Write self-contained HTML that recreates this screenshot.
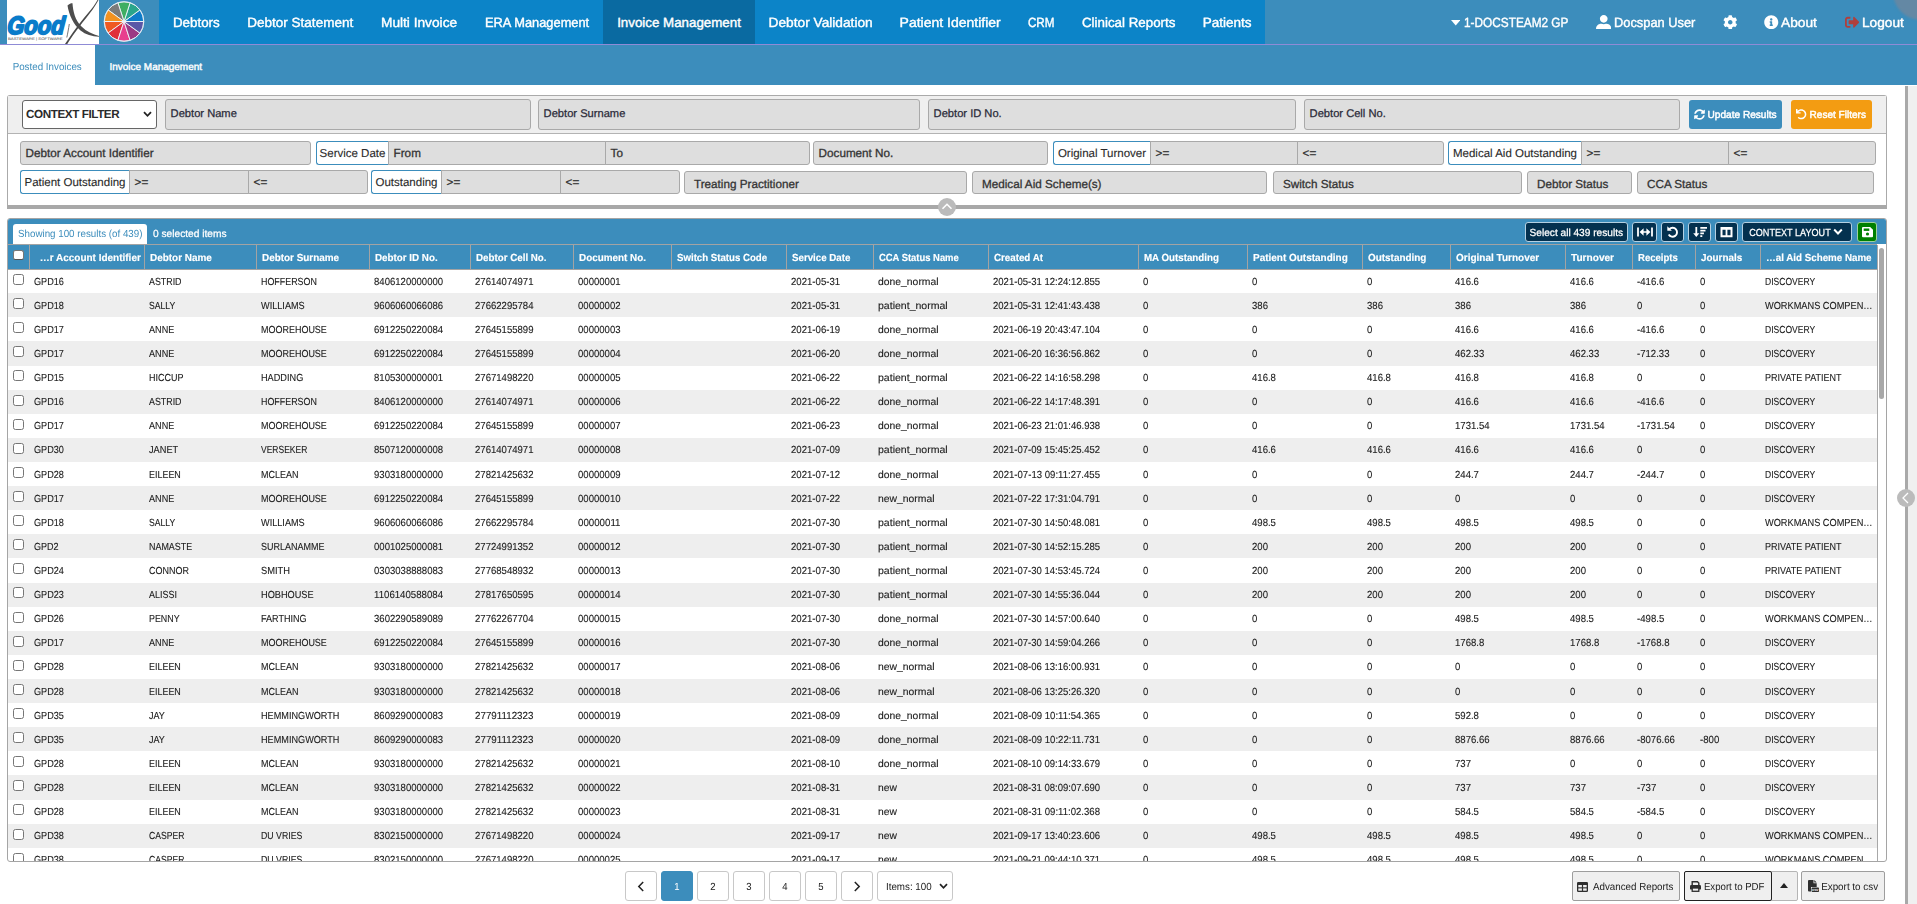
<!DOCTYPE html>
<html lang="en">
<head>
<meta charset="utf-8">
<title>Invoice Management - Posted Invoices</title>
<style>
*{box-sizing:border-box;margin:0;padding:0}
html,body{width:1917px;height:904px;overflow:hidden;background:#fff}
body{position:relative;font-family:"Liberation Sans",sans-serif;color:#2b2b2b;font-size:10.26px;text-rendering:geometricPrecision}
.abs{position:absolute}
svg{display:block}
.fc,.fl,.fr{display:inline-block;white-space:nowrap}
.fc{transform-origin:50% 50%}.fl{transform-origin:0 50%}.fr{transform-origin:100% 50%}
/* ---------- top header ---------- */
#top{position:absolute;left:0;top:0;width:1917px;height:44px;background:#3c8dbc}
#pline{position:absolute;left:0;top:44px;width:1917px;height:1px;background:#8f8bd6}
#logo{position:absolute;left:7px;top:0;width:92px;height:44px;background:#fff;overflow:hidden}
#wheel{position:absolute;left:101.7px;top:-1.2px}
#nav{position:absolute;left:159px;top:0;width:1106px;height:44px;background:#0c84c8}
.ni{position:absolute;top:0;height:44px;line-height:45.5px;text-align:center;color:#fff;font-size:13.33px;-webkit-text-stroke:.4px #fff;white-space:nowrap}
.ni.act{background:#0a6aa1}
.ri{position:absolute;top:0;height:44px;line-height:45.5px;color:#fff;font-size:13.33px;-webkit-text-stroke:.4px #fff;white-space:nowrap}
#corner{position:absolute;left:1893px;top:-36px;width:56px;height:56px;border-radius:50%;background:#6488a4;filter:blur(1px)}
/* ---------- second bar ---------- */
#bar2{position:absolute;left:0;top:45px;width:1917px;height:40px;background:#3c8dbc}
#tab1{position:absolute;left:0;top:0;width:95px;height:40px;background:#fff;color:#3c8dbc;line-height:45px;text-align:center;white-space:nowrap}
#tab2{position:absolute;left:95px;top:0;width:120px;height:40px;color:#fff;line-height:45px;text-align:center;-webkit-text-stroke:.4px #fff;white-space:nowrap}
/* ---------- right sidebar ---------- */
#rsb{position:absolute;left:1905px;top:86px;width:12px;height:818px;background:#f0f0f0}
#rsb i{position:absolute;left:0;top:0;width:3px;height:818px;background:#a9a9a9}
#rsbc{position:absolute;left:1897px;top:489px;width:18px;height:18px;border-radius:50%;background:#bbb}
/* ---------- filter panel ---------- */
#fp{position:absolute;left:7px;top:95px;width:1880px;height:114px;border:1px solid #aaa;border-bottom:4px solid #a8a8a8;border-radius:3px 3px 0 0;background:#fff}
#fp1{position:absolute;left:0;top:0;width:1878px;height:38px;background:#efefef;border-bottom:1px solid #b3b3b3}
.in{position:absolute;background:#dedede;border:1px solid #a9a9a9;border-radius:3px;color:#333;font-size:11.7px;white-space:nowrap;-webkit-text-stroke:.3px #333;padding-left:4.6px}
.r1{top:99px;height:31px;line-height:29.5px;font-size:11.15px;color:#2a2a38;-webkit-text-stroke:.25px #2a2a38}
.r2{top:141px;height:24px;line-height:24px}
.r3{top:170px;height:24px;line-height:24px}
.ms{top:171px;height:23px;line-height:26px;padding-left:9px}
.lab{position:absolute;background:#fff;border:1px solid #3c8dbc;border-right:0;border-radius:3px 0 0 3px;color:#2b2b2b;font-size:11.5px;white-space:nowrap;text-align:center;height:24px;line-height:24px;z-index:2;-webkit-text-stroke:.12px #2b2b2b}
.nl{border-radius:0;border-left:0}
.nr{border-radius:0 3px 3px 0}
.mid{border-radius:0}
#ctx{position:absolute;left:22px;top:100px;width:135px;height:29px;background:#fff;border:1px solid #666;border-radius:3px;font-size:11.7px;font-weight:bold;line-height:28px;padding-left:3px;color:#2a2a2a;letter-spacing:-.42px;white-space:nowrap}
.btn{position:absolute;top:100px;height:29px;line-height:31px;border-radius:3px;color:#fff;-webkit-text-stroke:.45px #fff;white-space:nowrap;text-align:center}
.btn svg{display:inline-block;vertical-align:-1.5px;margin-right:2.5px}
#colh{position:absolute;left:938px;top:198px;width:18px;height:18px;border-radius:50%;background:#bbb}
/* ---------- table panel ---------- */
#tp{position:absolute;left:7px;top:218px;width:1880px;height:644px;border:1px solid #a5a5a5;border-radius:3px;background:#fff;overflow:hidden}
#tbar{position:absolute;left:0;top:0;width:1878px;height:25px;background:#3c8dbc}
#ttab{position:absolute;left:5px;top:5px;width:134px;height:20px;background:#fff;border-radius:3px 3px 0 0;color:#3c8dbc;line-height:21px;text-align:center;white-space:nowrap}
#tsel{position:absolute;left:145px;top:5px;height:21px;color:#fff;line-height:21px;white-space:nowrap;-webkit-text-stroke:.25px #fff}
.tb{position:absolute;top:3.4px;height:19.6px;background:#04314f;border:1px solid #b4d0e2;border-radius:3px;color:#fff;line-height:21px;text-align:center;white-space:nowrap;-webkit-text-stroke:.25px #fff}
.tb svg{margin:0 auto}
#vline{position:absolute;left:1869px;top:26px;width:1px;height:620px;background:#a8a8a8;z-index:3}
#thead{position:absolute;left:0;top:25px;width:1869px;height:26px;z-index:2;background:#3c8dbc;border-top:1px solid #a3a3a3;border-bottom:1px solid #a3a3a3}
.hc{position:absolute;top:0;height:24px;line-height:28.4px;border-left:1px solid #a3a3a3;color:#fff;font-weight:bold;-webkit-text-stroke:.15px #fff;padding-left:5.2px;white-space:nowrap;overflow:hidden}
.hc:first-child{border-left:0;padding-left:0}
.hc.first{text-align:right;padding-right:2.8px}
#tbody{position:absolute;left:0;top:50px;width:1869px;height:592px;overflow:hidden}
.tr{position:absolute;left:0;width:1869px;height:24px;line-height:24px}
.tr.odd{background:#eee}
.td{position:absolute;top:2px;white-space:nowrap;color:#1c1c1c;-webkit-text-stroke:.12px #1c1c1c}
.tr.u .td{top:1px}
.cb{position:absolute;left:5.3px;top:5px;width:10.5px;height:10.5px;border:1px solid #767676;border-radius:2.5px;background:#fff}
.cb.hcb{top:4.8px;border-color:#777;border-bottom-color:#555}
#vthumb{position:absolute;left:1871px;top:28.5px;width:4.8px;height:151px;border-radius:3px;background:#a8a8a8}
/* ---------- bottom ---------- */
.pg{position:absolute;top:871px;width:32px;height:30px;border:1px solid #c8c8c8;border-radius:3px;background:#fff;color:#222;line-height:31px;text-align:center}
.pg.on{background:#3c8dbc;border-color:#3c8dbc;color:#fff}
.pg svg{margin:9px auto 0}
#items{position:absolute;left:877px;top:871px;width:76px;height:30px;border:1px solid #c8c8c8;border-radius:3px;background:#fff;line-height:31px;padding-left:8px;color:#222;white-space:nowrap}
.bb{position:absolute;top:871px;height:30px;border:1px solid #9d9d9d;border-radius:2px;background:#efefef;color:#222;line-height:32px;text-align:center;white-space:nowrap}
.bb svg{display:inline-block;vertical-align:-2px;margin-right:2px}
</style>
</head>
<body>

<!-- ================= TOP HEADER ================= -->
<div id="top">
  <div id="logo">
    <svg width="92" height="44" viewBox="0 0 92 44">
      <g transform="translate(0 33.800) skewX(-5)"><text x="-.3" y="0" font-family="Liberation Sans, sans-serif" font-size="25" font-weight="bold" font-style="italic" fill="#0a7cca" stroke="#0a7cca" stroke-width="1.900" stroke-linejoin="round" textLength="57.500" lengthAdjust="spacingAndGlyphs">Good</text></g>
      <text x="1" y="40" font-family="Liberation Sans, sans-serif" font-size="3.700" fill="#3c3c3c" textLength="54.500" lengthAdjust="spacingAndGlyphs">BASTEWARE | SOFTWARE</text>
      <path d="M60.500 5.500 C62.500 3.500 64.500 3 65.500 3.200 C66 11 68 20 74.500 26.500 C79.500 31.500 86 34.500 92 36 L92 36.800 C85 36.500 78.500 34.500 73.500 30.500 C66.500 24.500 62 15 60.500 5.500 Z" fill="#4d4d4d"/>
      <path d="M90.500 0 C88 4.500 85 8.500 81.500 12.500 C76 19 70 26.500 65.500 33 C63 36.800 60.500 40.500 58 44 L60.300 44 C62.500 40.500 65 36.500 68 32.500 C72.500 26 78 19.500 83 13 C86.500 8.500 89.500 4 91.500 0 Z" fill="#4a4a4a"/>
      <path d="M62.300 24 C61.500 29 60.800 33 59.800 37.500" stroke="#666" stroke-width=".9" fill="none"/>
    </svg>
  </div>
  <div id="wheel">
    <svg width="44" height="44" viewBox="-21.800 -22.300 43.600 43.600">
      <g stroke="#eef3f8" stroke-width="0.950">
        <path d="M0 0 L19.5 0 A19.5 19.5 0 0 0 15.776 -11.462 Z" fill="#0f7cc9"/>
        <path d="M0 0 L15.776 -11.462 A19.5 19.5 0 0 0 6.026 -18.546 Z" fill="#2aa58b"/>
        <path d="M0 0 L6.026 -18.546 A19.5 19.5 0 0 0 -6.026 -18.546 Z" fill="#3fae62"/>
        <path d="M0 0 L-6.026 -18.546 A19.5 19.5 0 0 0 -15.776 -11.462 Z" fill="#7b7b7b"/>
        <path d="M0 0 L-15.776 -11.462 A19.5 19.5 0 0 0 -19.5 0 Z" fill="#f39221"/>
        <path d="M0 0 L-19.5 0 A19.5 19.5 0 0 0 -15.776 11.462 Z" fill="#ef5a22"/>
        <path d="M0 0 L-15.776 11.462 A19.5 19.5 0 0 0 -6.026 18.546 Z" fill="#e0303b"/>
        <path d="M0 0 L-6.026 18.546 A19.5 19.5 0 0 0 6.026 18.546 Z" fill="#e83e8e"/>
        <path d="M0 0 L6.026 18.546 A19.5 19.5 0 0 0 15.776 11.462 Z" fill="#9c3a84"/>
        <path d="M0 0 L15.776 11.462 A19.5 19.5 0 0 0 19.5 0 Z" fill="#5a57a7"/>
      </g>
      <circle cx="0" cy="0" r="19.6" fill="none" stroke="#dfe8f0" stroke-width=".8"/>
    </svg>
  </div>
  <div id="nav">
    <div class="ni" style="left:0;width:74.5px"><span class="fc" style="transform:scaleX(1.002)">Debtors</span></div>
    <div class="ni" style="left:74.5px;width:133.5px"><span class="fc" style="transform:scaleX(1.014)">Debtor Statement</span></div>
    <div class="ni" style="left:208px;width:103.5px"><span class="fc" style="transform:scaleX(1.028)">Multi Invoice</span></div>
    <div class="ni" style="left:311.5px;width:132.5px"><span class="fc" style="transform:scaleX(0.963)">ERA Management</span></div>
    <div class="ni act" style="left:444px;width:152px"><span class="fc" style="transform:scaleX(1.000)">Invoice Management</span></div>
    <div class="ni" style="left:596px;width:131.5px"><span class="fc" style="transform:scaleX(1.028)">Debtor Validation</span></div>
    <div class="ni" style="left:727.5px;width:128px"><span class="fc" style="transform:scaleX(1.051)">Patient Identifier</span></div>
    <div class="ni" style="left:855.5px;width:53.5px"><span class="fc" style="transform:scaleX(0.875)">CRM</span></div>
    <div class="ni" style="left:909px;width:121.5px"><span class="fc" style="transform:scaleX(1.001)">Clinical Reports</span></div>
    <div class="ni" style="left:1030.5px;width:75.5px"><span class="fc" style="transform:scaleX(1.014)">Patients</span></div>
  </div>
  <!-- right items -->
  <svg class="abs" style="left:1450.700px;top:20px" width="9.500" height="6" viewBox="0 0 9.500 6"><path d="M0 0H9.500L4.750 5.600Z" fill="#fff"/></svg>
  <div class="ri" style="left:1463.5px"><span class="fl" style="transform:scaleX(0.887)">1-DOCSTEAM2 GP</span></div>
  <svg class="abs" style="left:1595.5px;top:14.5px" width="15.5" height="14.5" viewBox="0 0 448 420"><path fill="#fff" d="M224 224c62 0 112-50 112-112S286 0 224 0 112 50 112 112s50 112 112 112zm78 28h-15c-19 9-41 14-63 14s-44-5-63-14h-15C66 252 0 318 0 400v0c0 11 9 20 20 20h408c11 0 20-9 20-20v0c0-82-66-148-146-148z"/></svg>
  <div class="ri" style="left:1613.5px"><span class="fl" style="transform:scaleX(0.963)">Docspan User</span></div>
  <svg class="abs" style="left:1722.5px;top:14.5px" width="14.5" height="14.5" viewBox="0 0 512 512"><path fill="#fff" d="M487.4 315.700l-42.600-24.600c4.300-23.200 4.300-47 0-70.200l42.600-24.600c4.900-2.800 7.100-8.600 5.500-14-11.100-35.600-30-67.800-54.700-94.600-3.800-4.100-10-5.100-14.800-2.300L380.800 110c-17.900-15.400-38.500-27.300-60.800-35.100V25.800c0-5.600-3.900-10.500-9.400-11.700-36.700-8.200-74.300-7.800-109.200 0-5.500 1.200-9.400 6.100-9.400 11.700V75c-22.200 7.900-42.800 19.800-60.800 35.100L88.700 85.500c-4.900-2.800-11-1.900-14.800 2.300-24.700 26.700-43.600 58.900-54.700 94.600-1.700 5.400.6 11.200 5.500 14L67.300 221c-4.300 23.200-4.300 47 0 70.200l-42.600 24.600c-4.900 2.800-7.100 8.600-5.500 14 11.100 35.600 30 67.800 54.700 94.600 3.800 4.100 10 5.100 14.800 2.300l42.600-24.600c17.900 15.400 38.500 27.300 60.800 35.100v49.200c0 5.600 3.900 10.500 9.400 11.700 36.700 8.200 74.300 7.800 109.200 0 5.500-1.200 9.400-6.100 9.400-11.700v-49.200c22.200-7.900 42.800-19.800 60.800-35.100l42.600 24.600c4.900 2.800 11 1.900 14.800-2.300 24.700-26.700 43.600-58.900 54.700-94.600 1.500-5.500-.7-11.300-5.600-14.100zM256 336c-44.100 0-80-35.900-80-80s35.900-80 80-80 80 35.900 80 80-35.900 80-80 80z"/></svg>
  <svg class="abs" style="left:1764px;top:14.500px" width="14.5" height="14.5" viewBox="0 0 512 512"><path fill="#fff" d="M256 8C119 8 8 119 8 256s111 248 248 248 248-111 248-248S393 8 256 8zm0 110c23.200 0 42 18.800 42 42s-18.800 42-42 42-42-18.800-42-42 18.800-42 42-42zm56 254c0 6.600-5.400 12-12 12h-88c-6.600 0-12-5.400-12-12v-24c0-6.600 5.400-12 12-12h12v-64h-12c-6.600 0-12-5.400-12-12v-24c0-6.600 5.400-12 12-12h64c6.600 0 12 5.400 12 12v100h12c6.600 0 12 5.400 12 12v24z"/></svg>
  <div class="ri" style="left:1781px"><span class="fl" style="transform:scaleX(1.031)">About</span></div>
  <svg class="abs" style="left:1844.5px;top:15.500px" width="14.5" height="12.500" viewBox="0 0 512 440"><path fill="#b03f3c" d="M497 237 329 405c-15 15-41 4.500-41-17v-96H152c-13.300 0-24-10.700-24-24v-96c0-13.300 10.700-24 24-24h136V52c0-21.400 25.900-32 41-17l168 168c9.300 9.400 9.300 24.600 0 34zM192 400v-40c0-6.600-5.400-12-12-12H96c-17.700 0-32-14.300-32-32V124c0-17.700 14.300-32 32-32h84c6.600 0 12-5.400 12-12V40c0-6.600-5.400-12-12-12H96C43 28 0 71 0 124v192c0 53 43 96 96 96h84c6.600 0 12-5.400 12-12z"/></svg>
  <div class="ri" style="left:1862px"><span class="fl" style="transform:scaleX(1.025)">Logout</span></div>
  <div id="corner"></div>
</div>
<div id="pline"></div>

<!-- ================= SECOND BAR ================= -->
<div id="bar2">
  <div id="tab1" style="padding-right:1.5px"><span class="fc" style="transform:scaleX(0.955)">Posted Invoices</span></div>
  <div id="tab2" style="padding-left:1.5px"><span class="fc" style="font-size:9.97px;transform:scaleX(1.000)">Invoice Management</span></div>
</div>

<!-- ================= RIGHT SIDEBAR ================= -->
<div id="rsb"><i></i></div>
<div id="rsbc"><svg width="18" height="18" viewBox="0 0 18 18"><path d="M11 4 6 9l5 5" fill="none" stroke="#fff" stroke-width="1.300"/></svg></div>

<!-- ================= FILTER PANEL ================= -->
<div id="fp"><div id="fp1"></div></div>
<div id="ctx">CONTEXT FILTER<svg class="abs" style="left:120px;top:10px" width="9" height="7" viewBox="0 0 9 7"><path d="M1 1.200 4.500 4.800 8 1.200" fill="none" stroke="#222" stroke-width="1.800"/></svg></div>
<div class="in r1" style="left:165px;width:366px">Debtor Name</div>
<div class="in r1" style="left:538px;width:382px">Debtor Surname</div>
<div class="in r1" style="left:928px;width:368px">Debtor ID No.</div>
<div class="in r1" style="left:1304px;width:376px">Debtor Cell No.</div>
<div class="btn" style="left:1689px;width:93px;background:#3c8dbc"><svg width="11" height="11" viewBox="0 0 512 512"><path fill="#fff" d="M370.700 133.300C339.500 104 298.900 88 255.800 88c-77.500.1-144.300 53.200-162.800 126.900-1.300 5.400-6.100 9.200-11.700 9.200H24.100c-7.500 0-13.200-6.800-11.800-14.200C33.900 94.900 134.800 8 256 8c66.400 0 126.800 26.100 171.300 68.700L463 41c15.100-15.100 41-4.400 41 17v134c0 13.300-10.700 24-24 24H346c-21.400 0-32.100-25.900-17-41l41.700-41.700zM32 296h134c21.400 0 32.100 25.900 17 41l-41.800 41.700c31.300 29.300 71.800 45.300 114.900 45.300 77.400-.1 144.300-53.100 162.800-126.800 1.300-5.400 6.100-9.200 11.700-9.200h57.300c7.500 0 13.200 6.800 11.800 14.200C478.100 417.100 377.200 504 256 504c-66.400 0-126.800-26.100-171.300-68.700L49 471c-15.100 15.100-41 4.400-41-17V320c0-13.300 10.700-24 24-24z"/></svg><span class="fc" style="transform:scaleX(0.986)">Update Results</span></div>
<div class="btn" style="left:1791px;width:81px;background:#f39c12"><svg width="10.500" height="10.500" viewBox="0 0 512 512"><path fill="#fff" d="M212.300 224.300H12c-6.600 0-12-5.400-12-12V12C0 5.400 5.400 0 12 0h48c6.600 0 12 5.400 12 12v78.100C117.800 39.300 184.300 7.500 258.200 8c136.900.9 246.400 111.400 245.800 248.300C503.400 392.700 392.600 503 256 503c-64 0-122.300-24.200-166.300-64-5.100-4.600-5.300-12.500-.5-17.400l34-34c4.500-4.500 11.700-4.700 16.400-.5C170.800 414.300 211.500 431 256 431c96.700 0 175-78.300 175-175 0-96.700-78.300-175-175-175-58.200 0-109.700 28.400-141.500 72.100h97.800c6.600 0 12 5.400 12 12v47.200c0 6.600-5.400 12-12 12z"/></svg><span class="fc" style="transform:scaleX(0.979)">Reset Filters</span></div>

<div class="in r2" style="left:20px;width:291px">Debtor Account Identifier</div>
<div class="lab" style="left:316px;top:141px;width:72px">Service Date</div>
<div class="in r2 mid" style="left:388px;width:218px">From</div>
<div class="in r2 nr" style="left:605px;width:205px">To</div>
<div class="in r2" style="left:813px;width:235px">Document No.</div>
<div class="lab" style="left:1053px;top:141px;width:97px">Original Turnover</div>
<div class="in r2 mid" style="left:1150px;width:148px">&gt;=</div>
<div class="in r2 nr" style="left:1297px;width:147px">&lt;=</div>
<div class="lab" style="left:1448px;top:141px;width:133px">Medical Aid Outstanding</div>
<div class="in r2 mid" style="left:1581px;width:148px">&gt;=</div>
<div class="in r2 nr" style="left:1728px;width:148px">&lt;=</div>

<div class="lab" style="left:20px;top:170px;width:109px">Patient Outstanding</div>
<div class="in r3 mid" style="left:129px;width:120px">&gt;=</div>
<div class="in r3 nr" style="left:248px;width:120px">&lt;=</div>
<div class="lab" style="left:371px;top:170px;width:70px">Outstanding</div>
<div class="in r3 mid" style="left:441px;width:120px">&gt;=</div>
<div class="in r3 nr" style="left:560px;width:120px">&lt;=</div>
<div class="in ms" style="left:684px;width:283px">Treating Practitioner</div>
<div class="in ms" style="left:972px;width:295px">Medical Aid Scheme(s)</div>
<div class="in ms" style="left:1273px;width:249px">Switch Status</div>
<div class="in ms" style="left:1527px;width:105px">Debtor Status</div>
<div class="in ms" style="left:1637px;width:237px">CCA Status</div>
<div id="colh"><svg width="18" height="18" viewBox="0 0 18 18"><path d="M4.500 10.800 9 6.300l4.500 4.500" fill="none" stroke="#fff" stroke-width="1.600"/></svg></div>

<!-- ================= TABLE PANEL ================= -->
<div id="tp">
  <div id="tbar">
    <div id="ttab"><span class="fc" style="transform:scaleX(0.954)">Showing 100 results (of 439)</span></div>
    <div id="tsel"><span class="fl" style="transform:scaleX(0.994)">0 selected items</span></div>
    <div class="tb" style="left:1517px;width:103px"><span class="fc" style="transform:scaleX(0.989)">Select all 439 results</span></div>
    <div class="tb" style="left:1624px;width:25px"><svg width="16" height="18" viewBox="0 0 16 18"><path d="M1 4.400v9.200M15 4.400v9.200" stroke="#fff" stroke-width="1.800"/><path d="M4 9h8" stroke="#fff" stroke-width="1.700"/><path d="M6.600 5.300 2.600 9l4 3.700zM9.400 5.300l4 3.700-4 3.700z" fill="#fff"/></svg></div>
    <div class="tb" style="left:1653px;width:23px"><svg width="12" height="18" viewBox="0 0 12 18"><path d="M2.400 6A4.500 4.500 0 1 1 1.700 11.600" fill="none" stroke="#fff" stroke-width="1.900"/><path d="M.3 3.200v4.600h4.600z" fill="#fff"/></svg></div>
    <div class="tb" style="left:1680px;width:23px"><svg width="14" height="18" viewBox="0 0 14 18"><path d="M3.300 4v8" stroke="#fff" stroke-width="1.800"/><path d="M.2 10.200h6.200L3.300 14z" fill="#fff"/><path d="M7.300 4.800H14M7.300 7.600h5.200M7.300 10.400h3.600M7.300 13.200h2" stroke="#fff" stroke-width="1.700"/></svg></div>
    <div class="tb" style="left:1707px;width:23px"><svg width="13" height="18" viewBox="0 0 13 18"><path d="M1.500 5h10v8.200h-10z" fill="none" stroke="#fff" stroke-width="2"/><path d="M1 5.500h11" stroke="#fff" stroke-width="2.600"/><path d="M6.500 5v8" stroke="#fff" stroke-width="1.800"/></svg></div>
    <div class="tb" style="left:1734px;width:110px;padding-right:14px"><span class="fc" style="transform:scaleX(0.887)">CONTEXT LAYOUT</span><svg class="abs" style="left:90px;top:5px" width="10" height="8" viewBox="0 0 10 8"><path d="M1.200 1.500 5 5.500l3.800-4" fill="none" stroke="#fff" stroke-width="1.900"/></svg></div>
    <div class="tb" style="left:1849px;width:20px;background:#008000;border-color:#9ed09e"><svg width="11" height="18" viewBox="0 0 11 18"><path d="M0 5a1 1 0 0 1 1-1h7.200L11 6.800v6.400a1 1 0 0 1-1 1H1a1 1 0 0 1-1-1z" fill="#fff"/><rect x="1.700" y="5.500" width="5.600" height="2.400" fill="#008000"/><circle cx="5.500" cy="11" r="1.600" fill="#008000"/></svg></div>
  </div>
  <div id="thead"><div class="hc" style="left:0;width:21px"><span class="cb hcb"></span></div><div class="hc first" style="left:21px;width:115px"><span class="fr" style="transform:scaleX(0.974)">…r Account Identifier</span></div><div class="hc" style="left:136px;width:112px"><span class="fl" style="transform:scaleX(0.969)">Debtor Name</span></div><div class="hc" style="left:248px;width:113px"><span class="fl" style="transform:scaleX(0.967)">Debtor Surname</span></div><div class="hc" style="left:361px;width:101px"><span class="fl" style="transform:scaleX(0.957)">Debtor ID No.</span></div><div class="hc" style="left:462px;width:103px"><span class="fl" style="transform:scaleX(0.953)">Debtor Cell No.</span></div><div class="hc" style="left:565px;width:98px"><span class="fl" style="transform:scaleX(0.964)">Document No.</span></div><div class="hc" style="left:663px;width:115px"><span class="fl" style="transform:scaleX(0.942)">Switch Status Code</span></div><div class="hc" style="left:778px;width:87px"><span class="fl" style="transform:scaleX(0.949)">Service Date</span></div><div class="hc" style="left:865px;width:115px"><span class="fl" style="transform:scaleX(0.919)">CCA Status Name</span></div><div class="hc" style="left:980px;width:150px"><span class="fl" style="transform:scaleX(0.951)">Created At</span></div><div class="hc" style="left:1130px;width:109px"><span class="fl" style="transform:scaleX(0.950)">MA Outstanding</span></div><div class="hc" style="left:1239px;width:115px"><span class="fl" style="transform:scaleX(0.973)">Patient Outstanding</span></div><div class="hc" style="left:1354px;width:88px"><span class="fl" style="transform:scaleX(0.968)">Outstanding</span></div><div class="hc" style="left:1442px;width:115px"><span class="fl" style="transform:scaleX(0.976)">Original Turnover</span></div><div class="hc" style="left:1557px;width:67px"><span class="fl" style="transform:scaleX(0.986)">Turnover</span></div><div class="hc" style="left:1624px;width:63px"><span class="fl" style="transform:scaleX(0.930)">Receipts</span></div><div class="hc" style="left:1687px;width:65px"><span class="fl" style="transform:scaleX(0.965)">Journals</span></div><div class="hc" style="left:1752px;width:117px"><span class="fl" style="transform:scaleX(0.953)">…al Aid Scheme Name</span></div></div>
  <div id="tbody">
<div class="tr" style="top:0px;height:24px"><span class="cb"></span><span class="td" style="left:26.2px"><span class="fl" style="transform:scaleX(0.888)">GPD16</span></span><span class="td" style="left:141.2px"><span class="fl" style="transform:scaleX(0.865)">ASTRID</span></span><span class="td" style="left:253.2px"><span class="fl" style="transform:scaleX(0.869)">HOFFERSON</span></span><span class="td" style="left:366.2px"><span class="fl" style="transform:scaleX(0.932)">8406120000000</span></span><span class="td" style="left:467.2px"><span class="fl" style="transform:scaleX(0.932)">27614074971</span></span><span class="td" style="left:570.2px"><span class="fl" style="transform:scaleX(0.932)">00000001</span></span><span class="td" style="left:783.2px"><span class="fl" style="transform:scaleX(0.937)">2021-05-31</span></span><span class="td" style="left:870.2px"><span class="fl" style="transform:scaleX(1.012)">done_normal</span></span><span class="td" style="left:985.2px"><span class="fl" style="transform:scaleX(0.930)">2021-05-31 12:24:12.855</span></span><span class="td" style="left:1135.2px"><span class="fl" style="transform:scaleX(0.932)">0</span></span><span class="td" style="left:1244.2px"><span class="fl" style="transform:scaleX(0.932)">0</span></span><span class="td" style="left:1359.2px"><span class="fl" style="transform:scaleX(0.932)">0</span></span><span class="td" style="left:1447.2px"><span class="fl" style="transform:scaleX(0.932)">416.6</span></span><span class="td" style="left:1562.2px"><span class="fl" style="transform:scaleX(0.932)">416.6</span></span><span class="td" style="left:1629.2px"><span class="fl" style="transform:scaleX(0.937)">-416.6</span></span><span class="td" style="left:1692.2px"><span class="fl" style="transform:scaleX(0.932)">0</span></span><span class="td" style="left:1757.2px"><span class="fl" style="transform:scaleX(0.833)">DISCOVERY</span></span></div>
<div class="tr odd" style="top:24px;height:24px"><span class="cb"></span><span class="td" style="left:26.2px"><span class="fl" style="transform:scaleX(0.888)">GPD18</span></span><span class="td" style="left:141.2px"><span class="fl" style="transform:scaleX(0.841)">SALLY</span></span><span class="td" style="left:253.2px"><span class="fl" style="transform:scaleX(0.892)">WILLIAMS</span></span><span class="td" style="left:366.2px"><span class="fl" style="transform:scaleX(0.932)">9606060066086</span></span><span class="td" style="left:467.2px"><span class="fl" style="transform:scaleX(0.932)">27662295784</span></span><span class="td" style="left:570.2px"><span class="fl" style="transform:scaleX(0.932)">00000002</span></span><span class="td" style="left:783.2px"><span class="fl" style="transform:scaleX(0.937)">2021-05-31</span></span><span class="td" style="left:870.2px"><span class="fl" style="transform:scaleX(1.028)">patient_normal</span></span><span class="td" style="left:985.2px"><span class="fl" style="transform:scaleX(0.930)">2021-05-31 12:41:43.438</span></span><span class="td" style="left:1135.2px"><span class="fl" style="transform:scaleX(0.932)">0</span></span><span class="td" style="left:1244.2px"><span class="fl" style="transform:scaleX(0.932)">386</span></span><span class="td" style="left:1359.2px"><span class="fl" style="transform:scaleX(0.932)">386</span></span><span class="td" style="left:1447.2px"><span class="fl" style="transform:scaleX(0.932)">386</span></span><span class="td" style="left:1562.2px"><span class="fl" style="transform:scaleX(0.932)">386</span></span><span class="td" style="left:1629.2px"><span class="fl" style="transform:scaleX(0.932)">0</span></span><span class="td" style="left:1692.2px"><span class="fl" style="transform:scaleX(0.932)">0</span></span><span class="td" style="left:1757.2px"><span class="fl" style="transform:scaleX(0.899)">WORKMANS COMPEN…</span></span></div>
<div class="tr" style="top:48px;height:24px"><span class="cb"></span><span class="td" style="left:26.2px"><span class="fl" style="transform:scaleX(0.888)">GPD17</span></span><span class="td" style="left:141.2px"><span class="fl" style="transform:scaleX(0.887)">ANNE</span></span><span class="td" style="left:253.2px"><span class="fl" style="transform:scaleX(0.876)">MOOREHOUSE</span></span><span class="td" style="left:366.2px"><span class="fl" style="transform:scaleX(0.932)">6912250220084</span></span><span class="td" style="left:467.2px"><span class="fl" style="transform:scaleX(0.932)">27645155899</span></span><span class="td" style="left:570.2px"><span class="fl" style="transform:scaleX(0.932)">00000003</span></span><span class="td" style="left:783.2px"><span class="fl" style="transform:scaleX(0.937)">2021-06-19</span></span><span class="td" style="left:870.2px"><span class="fl" style="transform:scaleX(1.012)">done_normal</span></span><span class="td" style="left:985.2px"><span class="fl" style="transform:scaleX(0.930)">2021-06-19 20:43:47.104</span></span><span class="td" style="left:1135.2px"><span class="fl" style="transform:scaleX(0.932)">0</span></span><span class="td" style="left:1244.2px"><span class="fl" style="transform:scaleX(0.932)">0</span></span><span class="td" style="left:1359.2px"><span class="fl" style="transform:scaleX(0.932)">0</span></span><span class="td" style="left:1447.2px"><span class="fl" style="transform:scaleX(0.932)">416.6</span></span><span class="td" style="left:1562.2px"><span class="fl" style="transform:scaleX(0.932)">416.6</span></span><span class="td" style="left:1629.2px"><span class="fl" style="transform:scaleX(0.937)">-416.6</span></span><span class="td" style="left:1692.2px"><span class="fl" style="transform:scaleX(0.932)">0</span></span><span class="td" style="left:1757.2px"><span class="fl" style="transform:scaleX(0.833)">DISCOVERY</span></span></div>
<div class="tr odd" style="top:72px;height:25px"><span class="cb"></span><span class="td" style="left:26.2px"><span class="fl" style="transform:scaleX(0.888)">GPD17</span></span><span class="td" style="left:141.2px"><span class="fl" style="transform:scaleX(0.887)">ANNE</span></span><span class="td" style="left:253.2px"><span class="fl" style="transform:scaleX(0.876)">MOOREHOUSE</span></span><span class="td" style="left:366.2px"><span class="fl" style="transform:scaleX(0.932)">6912250220084</span></span><span class="td" style="left:467.2px"><span class="fl" style="transform:scaleX(0.932)">27645155899</span></span><span class="td" style="left:570.2px"><span class="fl" style="transform:scaleX(0.932)">00000004</span></span><span class="td" style="left:783.2px"><span class="fl" style="transform:scaleX(0.937)">2021-06-20</span></span><span class="td" style="left:870.2px"><span class="fl" style="transform:scaleX(1.012)">done_normal</span></span><span class="td" style="left:985.2px"><span class="fl" style="transform:scaleX(0.930)">2021-06-20 16:36:56.862</span></span><span class="td" style="left:1135.2px"><span class="fl" style="transform:scaleX(0.932)">0</span></span><span class="td" style="left:1244.2px"><span class="fl" style="transform:scaleX(0.932)">0</span></span><span class="td" style="left:1359.2px"><span class="fl" style="transform:scaleX(0.932)">0</span></span><span class="td" style="left:1447.2px"><span class="fl" style="transform:scaleX(0.932)">462.33</span></span><span class="td" style="left:1562.2px"><span class="fl" style="transform:scaleX(0.932)">462.33</span></span><span class="td" style="left:1629.2px"><span class="fl" style="transform:scaleX(0.936)">-712.33</span></span><span class="td" style="left:1692.2px"><span class="fl" style="transform:scaleX(0.932)">0</span></span><span class="td" style="left:1757.2px"><span class="fl" style="transform:scaleX(0.833)">DISCOVERY</span></span></div>
<div class="tr u" style="top:97px;height:24px"><span class="cb" style="top:4px"></span><span class="td" style="left:26.2px"><span class="fl" style="transform:scaleX(0.888)">GPD15</span></span><span class="td" style="left:141.2px"><span class="fl" style="transform:scaleX(0.878)">HICCUP</span></span><span class="td" style="left:253.2px"><span class="fl" style="transform:scaleX(0.894)">HADDING</span></span><span class="td" style="left:366.2px"><span class="fl" style="transform:scaleX(0.932)">8105300000001</span></span><span class="td" style="left:467.2px"><span class="fl" style="transform:scaleX(0.932)">27671498220</span></span><span class="td" style="left:570.2px"><span class="fl" style="transform:scaleX(0.932)">00000005</span></span><span class="td" style="left:783.2px"><span class="fl" style="transform:scaleX(0.937)">2021-06-22</span></span><span class="td" style="left:870.2px"><span class="fl" style="transform:scaleX(1.028)">patient_normal</span></span><span class="td" style="left:985.2px"><span class="fl" style="transform:scaleX(0.930)">2021-06-22 14:16:58.298</span></span><span class="td" style="left:1135.2px"><span class="fl" style="transform:scaleX(0.932)">0</span></span><span class="td" style="left:1244.2px"><span class="fl" style="transform:scaleX(0.932)">416.8</span></span><span class="td" style="left:1359.2px"><span class="fl" style="transform:scaleX(0.932)">416.8</span></span><span class="td" style="left:1447.2px"><span class="fl" style="transform:scaleX(0.932)">416.8</span></span><span class="td" style="left:1562.2px"><span class="fl" style="transform:scaleX(0.932)">416.8</span></span><span class="td" style="left:1629.2px"><span class="fl" style="transform:scaleX(0.932)">0</span></span><span class="td" style="left:1692.2px"><span class="fl" style="transform:scaleX(0.932)">0</span></span><span class="td" style="left:1757.2px"><span class="fl" style="transform:scaleX(0.881)">PRIVATE PATIENT</span></span></div>
<div class="tr odd u" style="top:121px;height:24px"><span class="cb"></span><span class="td" style="left:26.2px"><span class="fl" style="transform:scaleX(0.888)">GPD16</span></span><span class="td" style="left:141.2px"><span class="fl" style="transform:scaleX(0.865)">ASTRID</span></span><span class="td" style="left:253.2px"><span class="fl" style="transform:scaleX(0.869)">HOFFERSON</span></span><span class="td" style="left:366.2px"><span class="fl" style="transform:scaleX(0.932)">8406120000000</span></span><span class="td" style="left:467.2px"><span class="fl" style="transform:scaleX(0.932)">27614074971</span></span><span class="td" style="left:570.2px"><span class="fl" style="transform:scaleX(0.932)">00000006</span></span><span class="td" style="left:783.2px"><span class="fl" style="transform:scaleX(0.937)">2021-06-22</span></span><span class="td" style="left:870.2px"><span class="fl" style="transform:scaleX(1.012)">done_normal</span></span><span class="td" style="left:985.2px"><span class="fl" style="transform:scaleX(0.930)">2021-06-22 14:17:48.391</span></span><span class="td" style="left:1135.2px"><span class="fl" style="transform:scaleX(0.932)">0</span></span><span class="td" style="left:1244.2px"><span class="fl" style="transform:scaleX(0.932)">0</span></span><span class="td" style="left:1359.2px"><span class="fl" style="transform:scaleX(0.932)">0</span></span><span class="td" style="left:1447.2px"><span class="fl" style="transform:scaleX(0.932)">416.6</span></span><span class="td" style="left:1562.2px"><span class="fl" style="transform:scaleX(0.932)">416.6</span></span><span class="td" style="left:1629.2px"><span class="fl" style="transform:scaleX(0.937)">-416.6</span></span><span class="td" style="left:1692.2px"><span class="fl" style="transform:scaleX(0.932)">0</span></span><span class="td" style="left:1757.2px"><span class="fl" style="transform:scaleX(0.833)">DISCOVERY</span></span></div>
<div class="tr u" style="top:145px;height:24px"><span class="cb"></span><span class="td" style="left:26.2px"><span class="fl" style="transform:scaleX(0.888)">GPD17</span></span><span class="td" style="left:141.2px"><span class="fl" style="transform:scaleX(0.887)">ANNE</span></span><span class="td" style="left:253.2px"><span class="fl" style="transform:scaleX(0.876)">MOOREHOUSE</span></span><span class="td" style="left:366.2px"><span class="fl" style="transform:scaleX(0.932)">6912250220084</span></span><span class="td" style="left:467.2px"><span class="fl" style="transform:scaleX(0.932)">27645155899</span></span><span class="td" style="left:570.2px"><span class="fl" style="transform:scaleX(0.932)">00000007</span></span><span class="td" style="left:783.2px"><span class="fl" style="transform:scaleX(0.937)">2021-06-23</span></span><span class="td" style="left:870.2px"><span class="fl" style="transform:scaleX(1.012)">done_normal</span></span><span class="td" style="left:985.2px"><span class="fl" style="transform:scaleX(0.930)">2021-06-23 21:01:46.938</span></span><span class="td" style="left:1135.2px"><span class="fl" style="transform:scaleX(0.932)">0</span></span><span class="td" style="left:1244.2px"><span class="fl" style="transform:scaleX(0.932)">0</span></span><span class="td" style="left:1359.2px"><span class="fl" style="transform:scaleX(0.932)">0</span></span><span class="td" style="left:1447.2px"><span class="fl" style="transform:scaleX(0.932)">1731.54</span></span><span class="td" style="left:1562.2px"><span class="fl" style="transform:scaleX(0.932)">1731.54</span></span><span class="td" style="left:1629.2px"><span class="fl" style="transform:scaleX(0.936)">-1731.54</span></span><span class="td" style="left:1692.2px"><span class="fl" style="transform:scaleX(0.932)">0</span></span><span class="td" style="left:1757.2px"><span class="fl" style="transform:scaleX(0.833)">DISCOVERY</span></span></div>
<div class="tr odd u" style="top:169px;height:24px"><span class="cb"></span><span class="td" style="left:26.2px"><span class="fl" style="transform:scaleX(0.888)">GPD30</span></span><span class="td" style="left:141.2px"><span class="fl" style="transform:scaleX(0.899)">JANET</span></span><span class="td" style="left:253.2px"><span class="fl" style="transform:scaleX(0.830)">VERSEKER</span></span><span class="td" style="left:366.2px"><span class="fl" style="transform:scaleX(0.932)">8507120000008</span></span><span class="td" style="left:467.2px"><span class="fl" style="transform:scaleX(0.932)">27614074971</span></span><span class="td" style="left:570.2px"><span class="fl" style="transform:scaleX(0.932)">00000008</span></span><span class="td" style="left:783.2px"><span class="fl" style="transform:scaleX(0.937)">2021-07-09</span></span><span class="td" style="left:870.2px"><span class="fl" style="transform:scaleX(1.028)">patient_normal</span></span><span class="td" style="left:985.2px"><span class="fl" style="transform:scaleX(0.930)">2021-07-09 15:45:25.452</span></span><span class="td" style="left:1135.2px"><span class="fl" style="transform:scaleX(0.932)">0</span></span><span class="td" style="left:1244.2px"><span class="fl" style="transform:scaleX(0.932)">416.6</span></span><span class="td" style="left:1359.2px"><span class="fl" style="transform:scaleX(0.932)">416.6</span></span><span class="td" style="left:1447.2px"><span class="fl" style="transform:scaleX(0.932)">416.6</span></span><span class="td" style="left:1562.2px"><span class="fl" style="transform:scaleX(0.932)">416.6</span></span><span class="td" style="left:1629.2px"><span class="fl" style="transform:scaleX(0.932)">0</span></span><span class="td" style="left:1692.2px"><span class="fl" style="transform:scaleX(0.932)">0</span></span><span class="td" style="left:1757.2px"><span class="fl" style="transform:scaleX(0.833)">DISCOVERY</span></span></div>
<div class="tr" style="top:193px;height:24px"><span class="cb"></span><span class="td" style="left:26.2px"><span class="fl" style="transform:scaleX(0.888)">GPD28</span></span><span class="td" style="left:141.2px"><span class="fl" style="transform:scaleX(0.873)">EILEEN</span></span><span class="td" style="left:253.2px"><span class="fl" style="transform:scaleX(0.876)">MCLEAN</span></span><span class="td" style="left:366.2px"><span class="fl" style="transform:scaleX(0.932)">9303180000000</span></span><span class="td" style="left:467.2px"><span class="fl" style="transform:scaleX(0.932)">27821425632</span></span><span class="td" style="left:570.2px"><span class="fl" style="transform:scaleX(0.932)">00000009</span></span><span class="td" style="left:783.2px"><span class="fl" style="transform:scaleX(0.937)">2021-07-12</span></span><span class="td" style="left:870.2px"><span class="fl" style="transform:scaleX(1.012)">done_normal</span></span><span class="td" style="left:985.2px"><span class="fl" style="transform:scaleX(0.936)">2021-07-13 09:11:27.455</span></span><span class="td" style="left:1135.2px"><span class="fl" style="transform:scaleX(0.932)">0</span></span><span class="td" style="left:1244.2px"><span class="fl" style="transform:scaleX(0.932)">0</span></span><span class="td" style="left:1359.2px"><span class="fl" style="transform:scaleX(0.932)">0</span></span><span class="td" style="left:1447.2px"><span class="fl" style="transform:scaleX(0.932)">244.7</span></span><span class="td" style="left:1562.2px"><span class="fl" style="transform:scaleX(0.932)">244.7</span></span><span class="td" style="left:1629.2px"><span class="fl" style="transform:scaleX(0.937)">-244.7</span></span><span class="td" style="left:1692.2px"><span class="fl" style="transform:scaleX(0.932)">0</span></span><span class="td" style="left:1757.2px"><span class="fl" style="transform:scaleX(0.833)">DISCOVERY</span></span></div>
<div class="tr odd" style="top:217px;height:24px"><span class="cb"></span><span class="td" style="left:26.2px"><span class="fl" style="transform:scaleX(0.888)">GPD17</span></span><span class="td" style="left:141.2px"><span class="fl" style="transform:scaleX(0.887)">ANNE</span></span><span class="td" style="left:253.2px"><span class="fl" style="transform:scaleX(0.876)">MOOREHOUSE</span></span><span class="td" style="left:366.2px"><span class="fl" style="transform:scaleX(0.932)">6912250220084</span></span><span class="td" style="left:467.2px"><span class="fl" style="transform:scaleX(0.932)">27645155899</span></span><span class="td" style="left:570.2px"><span class="fl" style="transform:scaleX(0.932)">00000010</span></span><span class="td" style="left:783.2px"><span class="fl" style="transform:scaleX(0.937)">2021-07-22</span></span><span class="td" style="left:870.2px"><span class="fl" style="transform:scaleX(1.013)">new_normal</span></span><span class="td" style="left:985.2px"><span class="fl" style="transform:scaleX(0.930)">2021-07-22 17:31:04.791</span></span><span class="td" style="left:1135.2px"><span class="fl" style="transform:scaleX(0.932)">0</span></span><span class="td" style="left:1244.2px"><span class="fl" style="transform:scaleX(0.932)">0</span></span><span class="td" style="left:1359.2px"><span class="fl" style="transform:scaleX(0.932)">0</span></span><span class="td" style="left:1447.2px"><span class="fl" style="transform:scaleX(0.932)">0</span></span><span class="td" style="left:1562.2px"><span class="fl" style="transform:scaleX(0.932)">0</span></span><span class="td" style="left:1629.2px"><span class="fl" style="transform:scaleX(0.932)">0</span></span><span class="td" style="left:1692.2px"><span class="fl" style="transform:scaleX(0.932)">0</span></span><span class="td" style="left:1757.2px"><span class="fl" style="transform:scaleX(0.833)">DISCOVERY</span></span></div>
<div class="tr" style="top:241px;height:24px"><span class="cb"></span><span class="td" style="left:26.2px"><span class="fl" style="transform:scaleX(0.888)">GPD18</span></span><span class="td" style="left:141.2px"><span class="fl" style="transform:scaleX(0.841)">SALLY</span></span><span class="td" style="left:253.2px"><span class="fl" style="transform:scaleX(0.892)">WILLIAMS</span></span><span class="td" style="left:366.2px"><span class="fl" style="transform:scaleX(0.932)">9606060066086</span></span><span class="td" style="left:467.2px"><span class="fl" style="transform:scaleX(0.932)">27662295784</span></span><span class="td" style="left:570.2px"><span class="fl" style="transform:scaleX(0.948)">00000011</span></span><span class="td" style="left:783.2px"><span class="fl" style="transform:scaleX(0.937)">2021-07-30</span></span><span class="td" style="left:870.2px"><span class="fl" style="transform:scaleX(1.028)">patient_normal</span></span><span class="td" style="left:985.2px"><span class="fl" style="transform:scaleX(0.930)">2021-07-30 14:50:48.081</span></span><span class="td" style="left:1135.2px"><span class="fl" style="transform:scaleX(0.932)">0</span></span><span class="td" style="left:1244.2px"><span class="fl" style="transform:scaleX(0.932)">498.5</span></span><span class="td" style="left:1359.2px"><span class="fl" style="transform:scaleX(0.932)">498.5</span></span><span class="td" style="left:1447.2px"><span class="fl" style="transform:scaleX(0.932)">498.5</span></span><span class="td" style="left:1562.2px"><span class="fl" style="transform:scaleX(0.932)">498.5</span></span><span class="td" style="left:1629.2px"><span class="fl" style="transform:scaleX(0.932)">0</span></span><span class="td" style="left:1692.2px"><span class="fl" style="transform:scaleX(0.932)">0</span></span><span class="td" style="left:1757.2px"><span class="fl" style="transform:scaleX(0.899)">WORKMANS COMPEN…</span></span></div>
<div class="tr odd" style="top:265px;height:24px"><span class="cb"></span><span class="td" style="left:26.2px"><span class="fl" style="transform:scaleX(0.879)">GPD2</span></span><span class="td" style="left:141.2px"><span class="fl" style="transform:scaleX(0.871)">NAMASTE</span></span><span class="td" style="left:253.2px"><span class="fl" style="transform:scaleX(0.879)">SURLANAMME</span></span><span class="td" style="left:366.2px"><span class="fl" style="transform:scaleX(0.932)">0001025000081</span></span><span class="td" style="left:467.2px"><span class="fl" style="transform:scaleX(0.932)">27724991352</span></span><span class="td" style="left:570.2px"><span class="fl" style="transform:scaleX(0.932)">00000012</span></span><span class="td" style="left:783.2px"><span class="fl" style="transform:scaleX(0.937)">2021-07-30</span></span><span class="td" style="left:870.2px"><span class="fl" style="transform:scaleX(1.028)">patient_normal</span></span><span class="td" style="left:985.2px"><span class="fl" style="transform:scaleX(0.930)">2021-07-30 14:52:15.285</span></span><span class="td" style="left:1135.2px"><span class="fl" style="transform:scaleX(0.932)">0</span></span><span class="td" style="left:1244.2px"><span class="fl" style="transform:scaleX(0.932)">200</span></span><span class="td" style="left:1359.2px"><span class="fl" style="transform:scaleX(0.932)">200</span></span><span class="td" style="left:1447.2px"><span class="fl" style="transform:scaleX(0.932)">200</span></span><span class="td" style="left:1562.2px"><span class="fl" style="transform:scaleX(0.932)">200</span></span><span class="td" style="left:1629.2px"><span class="fl" style="transform:scaleX(0.932)">0</span></span><span class="td" style="left:1692.2px"><span class="fl" style="transform:scaleX(0.932)">0</span></span><span class="td" style="left:1757.2px"><span class="fl" style="transform:scaleX(0.881)">PRIVATE PATIENT</span></span></div>
<div class="tr" style="top:289px;height:25px"><span class="cb"></span><span class="td" style="left:26.2px"><span class="fl" style="transform:scaleX(0.888)">GPD24</span></span><span class="td" style="left:141.2px"><span class="fl" style="transform:scaleX(0.876)">CONNOR</span></span><span class="td" style="left:253.2px"><span class="fl" style="transform:scaleX(0.909)">SMITH</span></span><span class="td" style="left:366.2px"><span class="fl" style="transform:scaleX(0.932)">0303038888083</span></span><span class="td" style="left:467.2px"><span class="fl" style="transform:scaleX(0.932)">27768548932</span></span><span class="td" style="left:570.2px"><span class="fl" style="transform:scaleX(0.932)">00000013</span></span><span class="td" style="left:783.2px"><span class="fl" style="transform:scaleX(0.937)">2021-07-30</span></span><span class="td" style="left:870.2px"><span class="fl" style="transform:scaleX(1.028)">patient_normal</span></span><span class="td" style="left:985.2px"><span class="fl" style="transform:scaleX(0.930)">2021-07-30 14:53:45.724</span></span><span class="td" style="left:1135.2px"><span class="fl" style="transform:scaleX(0.932)">0</span></span><span class="td" style="left:1244.2px"><span class="fl" style="transform:scaleX(0.932)">200</span></span><span class="td" style="left:1359.2px"><span class="fl" style="transform:scaleX(0.932)">200</span></span><span class="td" style="left:1447.2px"><span class="fl" style="transform:scaleX(0.932)">200</span></span><span class="td" style="left:1562.2px"><span class="fl" style="transform:scaleX(0.932)">200</span></span><span class="td" style="left:1629.2px"><span class="fl" style="transform:scaleX(0.932)">0</span></span><span class="td" style="left:1692.2px"><span class="fl" style="transform:scaleX(0.932)">0</span></span><span class="td" style="left:1757.2px"><span class="fl" style="transform:scaleX(0.881)">PRIVATE PATIENT</span></span></div>
<div class="tr odd u" style="top:314px;height:24px"><span class="cb" style="top:4px"></span><span class="td" style="left:26.2px"><span class="fl" style="transform:scaleX(0.888)">GPD23</span></span><span class="td" style="left:141.2px"><span class="fl" style="transform:scaleX(0.874)">ALISSI</span></span><span class="td" style="left:253.2px"><span class="fl" style="transform:scaleX(0.896)">HOBHOUSE</span></span><span class="td" style="left:366.2px"><span class="fl" style="transform:scaleX(0.941)">1106140588084</span></span><span class="td" style="left:467.2px"><span class="fl" style="transform:scaleX(0.932)">27817650595</span></span><span class="td" style="left:570.2px"><span class="fl" style="transform:scaleX(0.932)">00000014</span></span><span class="td" style="left:783.2px"><span class="fl" style="transform:scaleX(0.937)">2021-07-30</span></span><span class="td" style="left:870.2px"><span class="fl" style="transform:scaleX(1.028)">patient_normal</span></span><span class="td" style="left:985.2px"><span class="fl" style="transform:scaleX(0.930)">2021-07-30 14:55:36.044</span></span><span class="td" style="left:1135.2px"><span class="fl" style="transform:scaleX(0.932)">0</span></span><span class="td" style="left:1244.2px"><span class="fl" style="transform:scaleX(0.932)">200</span></span><span class="td" style="left:1359.2px"><span class="fl" style="transform:scaleX(0.932)">200</span></span><span class="td" style="left:1447.2px"><span class="fl" style="transform:scaleX(0.932)">200</span></span><span class="td" style="left:1562.2px"><span class="fl" style="transform:scaleX(0.932)">200</span></span><span class="td" style="left:1629.2px"><span class="fl" style="transform:scaleX(0.932)">0</span></span><span class="td" style="left:1692.2px"><span class="fl" style="transform:scaleX(0.932)">0</span></span><span class="td" style="left:1757.2px"><span class="fl" style="transform:scaleX(0.833)">DISCOVERY</span></span></div>
<div class="tr u" style="top:338px;height:24px"><span class="cb"></span><span class="td" style="left:26.2px"><span class="fl" style="transform:scaleX(0.888)">GPD26</span></span><span class="td" style="left:141.2px"><span class="fl" style="transform:scaleX(0.866)">PENNY</span></span><span class="td" style="left:253.2px"><span class="fl" style="transform:scaleX(0.884)">FARTHING</span></span><span class="td" style="left:366.2px"><span class="fl" style="transform:scaleX(0.932)">3602290589089</span></span><span class="td" style="left:467.2px"><span class="fl" style="transform:scaleX(0.932)">27762267704</span></span><span class="td" style="left:570.2px"><span class="fl" style="transform:scaleX(0.932)">00000015</span></span><span class="td" style="left:783.2px"><span class="fl" style="transform:scaleX(0.937)">2021-07-30</span></span><span class="td" style="left:870.2px"><span class="fl" style="transform:scaleX(1.012)">done_normal</span></span><span class="td" style="left:985.2px"><span class="fl" style="transform:scaleX(0.930)">2021-07-30 14:57:00.640</span></span><span class="td" style="left:1135.2px"><span class="fl" style="transform:scaleX(0.932)">0</span></span><span class="td" style="left:1244.2px"><span class="fl" style="transform:scaleX(0.932)">0</span></span><span class="td" style="left:1359.2px"><span class="fl" style="transform:scaleX(0.932)">0</span></span><span class="td" style="left:1447.2px"><span class="fl" style="transform:scaleX(0.932)">498.5</span></span><span class="td" style="left:1562.2px"><span class="fl" style="transform:scaleX(0.932)">498.5</span></span><span class="td" style="left:1629.2px"><span class="fl" style="transform:scaleX(0.937)">-498.5</span></span><span class="td" style="left:1692.2px"><span class="fl" style="transform:scaleX(0.932)">0</span></span><span class="td" style="left:1757.2px"><span class="fl" style="transform:scaleX(0.899)">WORKMANS COMPEN…</span></span></div>
<div class="tr odd u" style="top:362px;height:24px"><span class="cb"></span><span class="td" style="left:26.2px"><span class="fl" style="transform:scaleX(0.888)">GPD17</span></span><span class="td" style="left:141.2px"><span class="fl" style="transform:scaleX(0.887)">ANNE</span></span><span class="td" style="left:253.2px"><span class="fl" style="transform:scaleX(0.876)">MOOREHOUSE</span></span><span class="td" style="left:366.2px"><span class="fl" style="transform:scaleX(0.932)">6912250220084</span></span><span class="td" style="left:467.2px"><span class="fl" style="transform:scaleX(0.932)">27645155899</span></span><span class="td" style="left:570.2px"><span class="fl" style="transform:scaleX(0.932)">00000016</span></span><span class="td" style="left:783.2px"><span class="fl" style="transform:scaleX(0.937)">2021-07-30</span></span><span class="td" style="left:870.2px"><span class="fl" style="transform:scaleX(1.012)">done_normal</span></span><span class="td" style="left:985.2px"><span class="fl" style="transform:scaleX(0.930)">2021-07-30 14:59:04.266</span></span><span class="td" style="left:1135.2px"><span class="fl" style="transform:scaleX(0.932)">0</span></span><span class="td" style="left:1244.2px"><span class="fl" style="transform:scaleX(0.932)">0</span></span><span class="td" style="left:1359.2px"><span class="fl" style="transform:scaleX(0.932)">0</span></span><span class="td" style="left:1447.2px"><span class="fl" style="transform:scaleX(0.932)">1768.8</span></span><span class="td" style="left:1562.2px"><span class="fl" style="transform:scaleX(0.932)">1768.8</span></span><span class="td" style="left:1629.2px"><span class="fl" style="transform:scaleX(0.936)">-1768.8</span></span><span class="td" style="left:1692.2px"><span class="fl" style="transform:scaleX(0.932)">0</span></span><span class="td" style="left:1757.2px"><span class="fl" style="transform:scaleX(0.833)">DISCOVERY</span></span></div>
<div class="tr u" style="top:386px;height:24px"><span class="cb"></span><span class="td" style="left:26.2px"><span class="fl" style="transform:scaleX(0.888)">GPD28</span></span><span class="td" style="left:141.2px"><span class="fl" style="transform:scaleX(0.873)">EILEEN</span></span><span class="td" style="left:253.2px"><span class="fl" style="transform:scaleX(0.876)">MCLEAN</span></span><span class="td" style="left:366.2px"><span class="fl" style="transform:scaleX(0.932)">9303180000000</span></span><span class="td" style="left:467.2px"><span class="fl" style="transform:scaleX(0.932)">27821425632</span></span><span class="td" style="left:570.2px"><span class="fl" style="transform:scaleX(0.932)">00000017</span></span><span class="td" style="left:783.2px"><span class="fl" style="transform:scaleX(0.937)">2021-08-06</span></span><span class="td" style="left:870.2px"><span class="fl" style="transform:scaleX(1.013)">new_normal</span></span><span class="td" style="left:985.2px"><span class="fl" style="transform:scaleX(0.930)">2021-08-06 13:16:00.931</span></span><span class="td" style="left:1135.2px"><span class="fl" style="transform:scaleX(0.932)">0</span></span><span class="td" style="left:1244.2px"><span class="fl" style="transform:scaleX(0.932)">0</span></span><span class="td" style="left:1359.2px"><span class="fl" style="transform:scaleX(0.932)">0</span></span><span class="td" style="left:1447.2px"><span class="fl" style="transform:scaleX(0.932)">0</span></span><span class="td" style="left:1562.2px"><span class="fl" style="transform:scaleX(0.932)">0</span></span><span class="td" style="left:1629.2px"><span class="fl" style="transform:scaleX(0.932)">0</span></span><span class="td" style="left:1692.2px"><span class="fl" style="transform:scaleX(0.932)">0</span></span><span class="td" style="left:1757.2px"><span class="fl" style="transform:scaleX(0.833)">DISCOVERY</span></span></div>
<div class="tr odd" style="top:410px;height:24px"><span class="cb"></span><span class="td" style="left:26.2px"><span class="fl" style="transform:scaleX(0.888)">GPD28</span></span><span class="td" style="left:141.2px"><span class="fl" style="transform:scaleX(0.873)">EILEEN</span></span><span class="td" style="left:253.2px"><span class="fl" style="transform:scaleX(0.876)">MCLEAN</span></span><span class="td" style="left:366.2px"><span class="fl" style="transform:scaleX(0.932)">9303180000000</span></span><span class="td" style="left:467.2px"><span class="fl" style="transform:scaleX(0.932)">27821425632</span></span><span class="td" style="left:570.2px"><span class="fl" style="transform:scaleX(0.932)">00000018</span></span><span class="td" style="left:783.2px"><span class="fl" style="transform:scaleX(0.937)">2021-08-06</span></span><span class="td" style="left:870.2px"><span class="fl" style="transform:scaleX(1.013)">new_normal</span></span><span class="td" style="left:985.2px"><span class="fl" style="transform:scaleX(0.930)">2021-08-06 13:25:26.320</span></span><span class="td" style="left:1135.2px"><span class="fl" style="transform:scaleX(0.932)">0</span></span><span class="td" style="left:1244.2px"><span class="fl" style="transform:scaleX(0.932)">0</span></span><span class="td" style="left:1359.2px"><span class="fl" style="transform:scaleX(0.932)">0</span></span><span class="td" style="left:1447.2px"><span class="fl" style="transform:scaleX(0.932)">0</span></span><span class="td" style="left:1562.2px"><span class="fl" style="transform:scaleX(0.932)">0</span></span><span class="td" style="left:1629.2px"><span class="fl" style="transform:scaleX(0.932)">0</span></span><span class="td" style="left:1692.2px"><span class="fl" style="transform:scaleX(0.932)">0</span></span><span class="td" style="left:1757.2px"><span class="fl" style="transform:scaleX(0.833)">DISCOVERY</span></span></div>
<div class="tr" style="top:434px;height:24px"><span class="cb"></span><span class="td" style="left:26.2px"><span class="fl" style="transform:scaleX(0.888)">GPD35</span></span><span class="td" style="left:141.2px"><span class="fl" style="transform:scaleX(0.880)">JAY</span></span><span class="td" style="left:253.2px"><span class="fl" style="transform:scaleX(0.891)">HEMMINGWORTH</span></span><span class="td" style="left:366.2px"><span class="fl" style="transform:scaleX(0.932)">8609290000083</span></span><span class="td" style="left:467.2px"><span class="fl" style="transform:scaleX(0.955)">27791112323</span></span><span class="td" style="left:570.2px"><span class="fl" style="transform:scaleX(0.932)">00000019</span></span><span class="td" style="left:783.2px"><span class="fl" style="transform:scaleX(0.937)">2021-08-09</span></span><span class="td" style="left:870.2px"><span class="fl" style="transform:scaleX(1.012)">done_normal</span></span><span class="td" style="left:985.2px"><span class="fl" style="transform:scaleX(0.936)">2021-08-09 10:11:54.365</span></span><span class="td" style="left:1135.2px"><span class="fl" style="transform:scaleX(0.932)">0</span></span><span class="td" style="left:1244.2px"><span class="fl" style="transform:scaleX(0.932)">0</span></span><span class="td" style="left:1359.2px"><span class="fl" style="transform:scaleX(0.932)">0</span></span><span class="td" style="left:1447.2px"><span class="fl" style="transform:scaleX(0.932)">592.8</span></span><span class="td" style="left:1562.2px"><span class="fl" style="transform:scaleX(0.932)">0</span></span><span class="td" style="left:1629.2px"><span class="fl" style="transform:scaleX(0.932)">0</span></span><span class="td" style="left:1692.2px"><span class="fl" style="transform:scaleX(0.932)">0</span></span><span class="td" style="left:1757.2px"><span class="fl" style="transform:scaleX(0.833)">DISCOVERY</span></span></div>
<div class="tr odd" style="top:458px;height:24px"><span class="cb"></span><span class="td" style="left:26.2px"><span class="fl" style="transform:scaleX(0.888)">GPD35</span></span><span class="td" style="left:141.2px"><span class="fl" style="transform:scaleX(0.880)">JAY</span></span><span class="td" style="left:253.2px"><span class="fl" style="transform:scaleX(0.891)">HEMMINGWORTH</span></span><span class="td" style="left:366.2px"><span class="fl" style="transform:scaleX(0.932)">8609290000083</span></span><span class="td" style="left:467.2px"><span class="fl" style="transform:scaleX(0.955)">27791112323</span></span><span class="td" style="left:570.2px"><span class="fl" style="transform:scaleX(0.932)">00000020</span></span><span class="td" style="left:783.2px"><span class="fl" style="transform:scaleX(0.937)">2021-08-09</span></span><span class="td" style="left:870.2px"><span class="fl" style="transform:scaleX(1.012)">done_normal</span></span><span class="td" style="left:985.2px"><span class="fl" style="transform:scaleX(0.936)">2021-08-09 10:22:11.731</span></span><span class="td" style="left:1135.2px"><span class="fl" style="transform:scaleX(0.932)">0</span></span><span class="td" style="left:1244.2px"><span class="fl" style="transform:scaleX(0.932)">0</span></span><span class="td" style="left:1359.2px"><span class="fl" style="transform:scaleX(0.932)">0</span></span><span class="td" style="left:1447.2px"><span class="fl" style="transform:scaleX(0.932)">8876.66</span></span><span class="td" style="left:1562.2px"><span class="fl" style="transform:scaleX(0.932)">8876.66</span></span><span class="td" style="left:1629.2px"><span class="fl" style="transform:scaleX(0.936)">-8076.66</span></span><span class="td" style="left:1692.2px"><span class="fl" style="transform:scaleX(0.939)">-800</span></span><span class="td" style="left:1757.2px"><span class="fl" style="transform:scaleX(0.833)">DISCOVERY</span></span></div>
<div class="tr" style="top:482px;height:24px"><span class="cb"></span><span class="td" style="left:26.2px"><span class="fl" style="transform:scaleX(0.888)">GPD28</span></span><span class="td" style="left:141.2px"><span class="fl" style="transform:scaleX(0.873)">EILEEN</span></span><span class="td" style="left:253.2px"><span class="fl" style="transform:scaleX(0.876)">MCLEAN</span></span><span class="td" style="left:366.2px"><span class="fl" style="transform:scaleX(0.932)">9303180000000</span></span><span class="td" style="left:467.2px"><span class="fl" style="transform:scaleX(0.932)">27821425632</span></span><span class="td" style="left:570.2px"><span class="fl" style="transform:scaleX(0.932)">00000021</span></span><span class="td" style="left:783.2px"><span class="fl" style="transform:scaleX(0.937)">2021-08-10</span></span><span class="td" style="left:870.2px"><span class="fl" style="transform:scaleX(1.012)">done_normal</span></span><span class="td" style="left:985.2px"><span class="fl" style="transform:scaleX(0.930)">2021-08-10 09:14:33.679</span></span><span class="td" style="left:1135.2px"><span class="fl" style="transform:scaleX(0.932)">0</span></span><span class="td" style="left:1244.2px"><span class="fl" style="transform:scaleX(0.932)">0</span></span><span class="td" style="left:1359.2px"><span class="fl" style="transform:scaleX(0.932)">0</span></span><span class="td" style="left:1447.2px"><span class="fl" style="transform:scaleX(0.932)">737</span></span><span class="td" style="left:1562.2px"><span class="fl" style="transform:scaleX(0.932)">0</span></span><span class="td" style="left:1629.2px"><span class="fl" style="transform:scaleX(0.932)">0</span></span><span class="td" style="left:1692.2px"><span class="fl" style="transform:scaleX(0.932)">0</span></span><span class="td" style="left:1757.2px"><span class="fl" style="transform:scaleX(0.833)">DISCOVERY</span></span></div>
<div class="tr odd" style="top:506px;height:25px"><span class="cb"></span><span class="td" style="left:26.2px"><span class="fl" style="transform:scaleX(0.888)">GPD28</span></span><span class="td" style="left:141.2px"><span class="fl" style="transform:scaleX(0.873)">EILEEN</span></span><span class="td" style="left:253.2px"><span class="fl" style="transform:scaleX(0.876)">MCLEAN</span></span><span class="td" style="left:366.2px"><span class="fl" style="transform:scaleX(0.932)">9303180000000</span></span><span class="td" style="left:467.2px"><span class="fl" style="transform:scaleX(0.932)">27821425632</span></span><span class="td" style="left:570.2px"><span class="fl" style="transform:scaleX(0.932)">00000022</span></span><span class="td" style="left:783.2px"><span class="fl" style="transform:scaleX(0.937)">2021-08-31</span></span><span class="td" style="left:870.2px"><span class="fl" style="transform:scaleX(1.004)">new</span></span><span class="td" style="left:985.2px"><span class="fl" style="transform:scaleX(0.930)">2021-08-31 08:09:07.690</span></span><span class="td" style="left:1135.2px"><span class="fl" style="transform:scaleX(0.932)">0</span></span><span class="td" style="left:1244.2px"><span class="fl" style="transform:scaleX(0.932)">0</span></span><span class="td" style="left:1359.2px"><span class="fl" style="transform:scaleX(0.932)">0</span></span><span class="td" style="left:1447.2px"><span class="fl" style="transform:scaleX(0.932)">737</span></span><span class="td" style="left:1562.2px"><span class="fl" style="transform:scaleX(0.932)">737</span></span><span class="td" style="left:1629.2px"><span class="fl" style="transform:scaleX(0.939)">-737</span></span><span class="td" style="left:1692.2px"><span class="fl" style="transform:scaleX(0.932)">0</span></span><span class="td" style="left:1757.2px"><span class="fl" style="transform:scaleX(0.833)">DISCOVERY</span></span></div>
<div class="tr u" style="top:531px;height:24px"><span class="cb" style="top:4px"></span><span class="td" style="left:26.2px"><span class="fl" style="transform:scaleX(0.888)">GPD28</span></span><span class="td" style="left:141.2px"><span class="fl" style="transform:scaleX(0.873)">EILEEN</span></span><span class="td" style="left:253.2px"><span class="fl" style="transform:scaleX(0.876)">MCLEAN</span></span><span class="td" style="left:366.2px"><span class="fl" style="transform:scaleX(0.932)">9303180000000</span></span><span class="td" style="left:467.2px"><span class="fl" style="transform:scaleX(0.932)">27821425632</span></span><span class="td" style="left:570.2px"><span class="fl" style="transform:scaleX(0.932)">00000023</span></span><span class="td" style="left:783.2px"><span class="fl" style="transform:scaleX(0.937)">2021-08-31</span></span><span class="td" style="left:870.2px"><span class="fl" style="transform:scaleX(1.004)">new</span></span><span class="td" style="left:985.2px"><span class="fl" style="transform:scaleX(0.936)">2021-08-31 09:11:02.368</span></span><span class="td" style="left:1135.2px"><span class="fl" style="transform:scaleX(0.932)">0</span></span><span class="td" style="left:1244.2px"><span class="fl" style="transform:scaleX(0.932)">0</span></span><span class="td" style="left:1359.2px"><span class="fl" style="transform:scaleX(0.932)">0</span></span><span class="td" style="left:1447.2px"><span class="fl" style="transform:scaleX(0.932)">584.5</span></span><span class="td" style="left:1562.2px"><span class="fl" style="transform:scaleX(0.932)">584.5</span></span><span class="td" style="left:1629.2px"><span class="fl" style="transform:scaleX(0.937)">-584.5</span></span><span class="td" style="left:1692.2px"><span class="fl" style="transform:scaleX(0.932)">0</span></span><span class="td" style="left:1757.2px"><span class="fl" style="transform:scaleX(0.833)">DISCOVERY</span></span></div>
<div class="tr odd u" style="top:555px;height:24px"><span class="cb"></span><span class="td" style="left:26.2px"><span class="fl" style="transform:scaleX(0.888)">GPD38</span></span><span class="td" style="left:141.2px"><span class="fl" style="transform:scaleX(0.840)">CASPER</span></span><span class="td" style="left:253.2px"><span class="fl" style="transform:scaleX(0.854)">DU VRIES</span></span><span class="td" style="left:366.2px"><span class="fl" style="transform:scaleX(0.932)">8302150000000</span></span><span class="td" style="left:467.2px"><span class="fl" style="transform:scaleX(0.932)">27671498220</span></span><span class="td" style="left:570.2px"><span class="fl" style="transform:scaleX(0.932)">00000024</span></span><span class="td" style="left:783.2px"><span class="fl" style="transform:scaleX(0.937)">2021-09-17</span></span><span class="td" style="left:870.2px"><span class="fl" style="transform:scaleX(1.004)">new</span></span><span class="td" style="left:985.2px"><span class="fl" style="transform:scaleX(0.930)">2021-09-17 13:40:23.606</span></span><span class="td" style="left:1135.2px"><span class="fl" style="transform:scaleX(0.932)">0</span></span><span class="td" style="left:1244.2px"><span class="fl" style="transform:scaleX(0.932)">498.5</span></span><span class="td" style="left:1359.2px"><span class="fl" style="transform:scaleX(0.932)">498.5</span></span><span class="td" style="left:1447.2px"><span class="fl" style="transform:scaleX(0.932)">498.5</span></span><span class="td" style="left:1562.2px"><span class="fl" style="transform:scaleX(0.932)">498.5</span></span><span class="td" style="left:1629.2px"><span class="fl" style="transform:scaleX(0.932)">0</span></span><span class="td" style="left:1692.2px"><span class="fl" style="transform:scaleX(0.932)">0</span></span><span class="td" style="left:1757.2px"><span class="fl" style="transform:scaleX(0.899)">WORKMANS COMPEN…</span></span></div>
<div class="tr u" style="top:579px;height:24px"><span class="cb"></span><span class="td" style="left:26.2px"><span class="fl" style="transform:scaleX(0.888)">GPD38</span></span><span class="td" style="left:141.2px"><span class="fl" style="transform:scaleX(0.840)">CASPER</span></span><span class="td" style="left:253.2px"><span class="fl" style="transform:scaleX(0.854)">DU VRIES</span></span><span class="td" style="left:366.2px"><span class="fl" style="transform:scaleX(0.932)">8302150000000</span></span><span class="td" style="left:467.2px"><span class="fl" style="transform:scaleX(0.932)">27671498220</span></span><span class="td" style="left:570.2px"><span class="fl" style="transform:scaleX(0.932)">00000025</span></span><span class="td" style="left:783.2px"><span class="fl" style="transform:scaleX(0.937)">2021-09-17</span></span><span class="td" style="left:870.2px"><span class="fl" style="transform:scaleX(1.004)">new</span></span><span class="td" style="left:985.2px"><span class="fl" style="transform:scaleX(0.930)">2021-09-21 09:44:10.371</span></span><span class="td" style="left:1135.2px"><span class="fl" style="transform:scaleX(0.932)">0</span></span><span class="td" style="left:1244.2px"><span class="fl" style="transform:scaleX(0.932)">498.5</span></span><span class="td" style="left:1359.2px"><span class="fl" style="transform:scaleX(0.932)">498.5</span></span><span class="td" style="left:1447.2px"><span class="fl" style="transform:scaleX(0.932)">498.5</span></span><span class="td" style="left:1562.2px"><span class="fl" style="transform:scaleX(0.932)">498.5</span></span><span class="td" style="left:1629.2px"><span class="fl" style="transform:scaleX(0.932)">0</span></span><span class="td" style="left:1692.2px"><span class="fl" style="transform:scaleX(0.932)">0</span></span><span class="td" style="left:1757.2px"><span class="fl" style="transform:scaleX(0.899)">WORKMANS COMPEN…</span></span></div>

  </div>
  <div id="vline"></div>
  <div id="vthumb"></div>
</div>

<!-- ================= BOTTOM ================= -->
<div class="pg" style="left:625px"><svg width="8" height="11" viewBox="0 0 8 11"><path d="M6.200 1 1.800 5.500 6.200 10" fill="none" stroke="#222" stroke-width="1.500"/></svg></div>
<div class="pg on" style="left:661px"><span class="fc" style="transform:scaleX(0.932)">1</span></div>
<div class="pg" style="left:697px"><span class="fc" style="transform:scaleX(0.932)">2</span></div>
<div class="pg" style="left:733px"><span class="fc" style="transform:scaleX(0.932)">3</span></div>
<div class="pg" style="left:769px"><span class="fc" style="transform:scaleX(0.932)">4</span></div>
<div class="pg" style="left:805px"><span class="fc" style="transform:scaleX(0.932)">5</span></div>
<div class="pg" style="left:841px"><svg width="8" height="11" viewBox="0 0 8 11"><path d="M1.800 1 6.200 5.500 1.800 10" fill="none" stroke="#222" stroke-width="1.500"/></svg></div>
<div id="items"><span class="fl" style="transform:scaleX(0.954)">Items: 100</span><svg class="abs" style="left:61px;top:11px" width="9" height="7" viewBox="0 0 9 7"><path d="M1 1.200 4.500 4.800 8 1.200" fill="none" stroke="#222" stroke-width="1.700"/></svg></div>

<div class="bb" style="left:1572px;width:108px"><svg width="11" height="10" viewBox="0 0 11 10" style="margin-right:3px"><rect x="0" y="0" width="11" height="10" rx="1.300" fill="#2e2e2e"/><rect x="1.300" y="3" width="3.600" height="2.300" fill="#efefef"/><rect x="6.100" y="3" width="3.600" height="2.300" fill="#efefef"/><rect x="1.300" y="6.400" width="3.600" height="2.300" fill="#efefef"/><rect x="6.100" y="6.400" width="3.600" height="2.300" fill="#efefef"/></svg><span class="fc" style="transform:scaleX(0.954)">Advanced Reports</span></div>
<div class="bb" style="left:1684px;width:114px;border-color:#b5b5b5"></div>
<div class="bb" style="left:1684px;width:88px;border-color:#222"><svg width="11" height="11" viewBox="0 0 11 11" style="position:relative;left:1px"><path d="M2.200 4V.7h5.200l1.400 1.400V4" fill="none" stroke="#2e2e2e" stroke-width="1.400"/><rect x="0" y="4" width="11" height="4.600" rx="1.200" fill="#2e2e2e"/><rect x="2.200" y="7" width="6.600" height="3.300" fill="#efefef" stroke="#2e2e2e" stroke-width="1.300"/></svg><span class="fc" style="transform:scaleX(0.941)">Export to PDF</span></div>
<svg class="abs" style="left:1780px;top:883px" width="8" height="5" viewBox="0 0 8 5"><path d="M0 5 4 0l4 5z" fill="#222"/></svg>
<div class="bb" style="left:1801px;width:84px"><svg width="11" height="12" viewBox="0 0 11 12" style="margin-right:3px;position:relative;left:1.600px"><path d="M0 1a1 1 0 0 1 1-1h4.500v3.200h3.200V7H3v4.500H1a1 1 0 0 1-1-1z" fill="#2e2e2e"/><path d="M6.300 0 8.700 2.400H6.300z" fill="#2e2e2e"/><rect x="3.600" y="7.600" width="7.400" height="4.400" rx=".8" fill="#2e2e2e"/><text x="7.300" y="11.200" font-family="Liberation Sans, sans-serif" font-size="3.900" font-weight="bold" fill="#efefef" text-anchor="middle">csv</text></svg><span class="fc" style="transform:scaleX(0.962)">Export to csv</span></div>

</body>
</html>
